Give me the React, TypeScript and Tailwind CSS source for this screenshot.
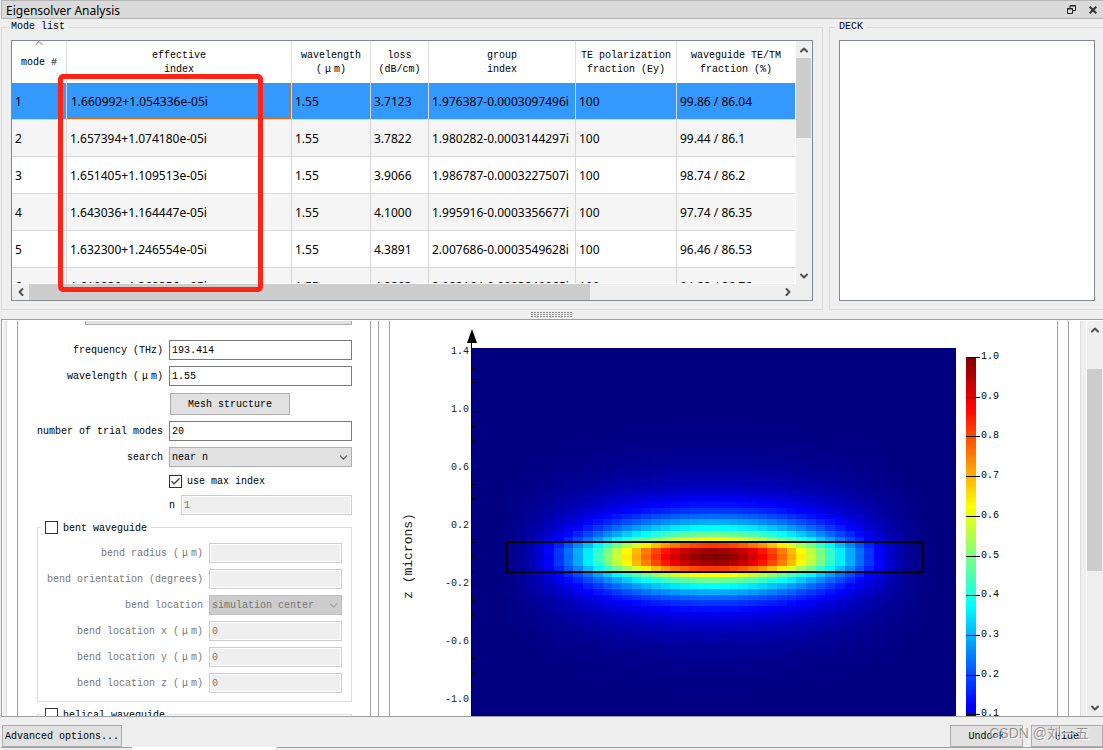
import type { ReactNode } from "react";
import { Check, ChevronDown, ChevronLeft, ChevronRight, ChevronUp } from "lucide-react";

const modes = [
  ["1", "1.660992+1.054336e-05i", "1.55", "3.7123", "1.976387-0.0003097496i", "100", "99.86 / 86.04"],
  ["2", "1.657394+1.074180e-05i", "1.55", "3.7822", "1.980282-0.0003144297i", "100", "99.44 / 86.1"],
  ["3", "1.651405+1.109513e-05i", "1.55", "3.9066", "1.986787-0.0003227507i", "100", "98.74 / 86.2"],
  ["4", "1.643036+1.164447e-05i", "1.55", "4.1000", "1.995916-0.0003356677i", "100", "97.74 / 86.35"],
  ["5", "1.632300+1.246554e-05i", "1.55", "4.3891", "2.007686-0.0003549628i", "100", "96.46 / 86.53"],
  ["6", "1.619220+1.368856e-05i", "1.55", "4.8203", "2.022164-0.0003840065i", "100", "94.88 / 86.76"],
];

const headers = [
  ["mode #"],
  ["effective", "index"],
  ["wavelength", "(μm)"],
  ["loss", "(dB/cm)"],
  ["group", "index"],
  ["TE polarization", "fraction (Ey)"],
  ["waveguide TE/TM", "fraction (%)"],
];

const CELL_W = 9.69;
const CELL_H = 5.77;
const CENTER_X = 324;
const CENTER_Y = 236;

// decay of the field away from the core, one entry per mesh row
const rowPeak = [1, 0.97, 0.82, 0.62];

function fieldAt(col: number, row: number) {
  const r = Math.abs(row);
  const c = Math.abs(col);
  const peak = r < rowPeak.length ? rowPeak[r] : 0.62 * Math.pow(0.78, r - 3);
  const half = 22 + r * 0.25;
  const edge = half - 2;
  const cos2 = (k: number) => Math.cos((Math.PI * k) / (2 * half)) ** 2;
  const side = c < edge ? cos2(c) : cos2(edge) * Math.pow(0.5, c - edge);
  return peak * side;
}

function jet(v: number) {
  const ch = (center: number) =>
    Math.round(255 * Math.max(0, Math.min(1, 1.5 - Math.abs(4 * v - center))));
  return `rgb(${ch(3)},${ch(2)},${ch(1)})`;
}

const cells: { x: number; y: number; fill: string }[] = [];
for (let row = -35; row <= 27; row++) {
  for (let col = -25; col < 25; col++) {
    const v = fieldAt(col, row);
    if (v < 0.004) continue;
    cells.push({
      x: CENTER_X + (col - 0.5) * CELL_W,
      y: CENTER_Y + (row - 0.5) * CELL_H,
      fill: jet(v),
    });
  }
}

const zLabels = ["1.4", "1.0", "0.6", "0.2", "-0.2", "-0.6", "-1.0"];
const barLabels = ["1.0", "0.9", "0.8", "0.7", "0.6", "0.5", "0.4", "0.3", "0.2", "0.1"];

// the mu takes two character cells
function UnitText({ text }: { text: string }) {
  const [before, after] = text.split("μ");
  if (after === undefined) return <>{text}</>;
  return (
    <>
      {before}
      <span className="inline-block w-3 text-center">μ</span>
      {after}
    </>
  );
}

function FieldPlot() {
  return (
    <svg
      width="630"
      height="395"
      viewBox="0 0 630 395"
      role="img"
      aria-label="Mode profile"
      className="block shrink-0 font-['Liberation_Mono',monospace]"
    >
      <defs>
        <linearGradient id="jet" gradientUnits="userSpaceOnUse" x1="0" y1="36" x2="0" y2="434">
          <stop offset="0" stopColor="#800000" />
          <stop offset="0.125" stopColor="#ff0000" />
          <stop offset="0.375" stopColor="#ffff00" />
          <stop offset="0.625" stopColor="#00ffff" />
          <stop offset="0.875" stopColor="#0000ff" />
          <stop offset="1" stopColor="#000080" />
        </linearGradient>
      </defs>

      <rect x="81" y="27" width="485" height="368" fill="#000080" />
      <g shapeRendering="crispEdges">
        {cells.map((c, i) => (
          <rect key={i} x={c.x} y={c.y} width={CELL_W} height={CELL_H} fill={c.fill} />
        ))}
      </g>
      <rect
        x="116.5"
        y="221"
        width="416"
        height="30"
        fill="none"
        stroke="#000"
        strokeWidth="2"
        strokeLinejoin="round"
      />

      <path d="M81.5 12V395" stroke="#000" />
      <path d="M82 8L87 22H77Z" />
      {Array.from({ length: 26 }, (_, i) => (
        <path
          key={i}
          d={`M82 ${Math.round(32 + i * 14.5) + 0.5}h${i % 4 === 0 ? 8 : 4}`}
          stroke="#000"
        />
      ))}
      {zLabels.map((t, i) => (
        <text key={t} x="79" y={33 + i * 58} textAnchor="end" fontSize="10" fill="#222">
          {t}
        </text>
      ))}
      <text transform="translate(22 235) rotate(-90)" textAnchor="middle" fontSize="13" fill="#222">
        z (microns)
      </text>

      <rect x="576" y="36" width="10" height="359" fill="url(#jet)" />
      {barLabels.map((t, i) => (
        <g key={t}>
          <path d={`M576 ${Math.round(36 + i * 39.7) + 0.5}h14`} stroke="#000" />
          <text x="591" y={Math.round(38 + i * 39.7)} fontSize="10">
            {t}
          </text>
        </g>
      ))}
    </svg>
  );
}

function VerticalScroll({ thumb }: { thumb: string }) {
  return (
    <div className="flex w-[15px] min-h-0 flex-1 flex-col items-center text-[#505050]">
      <button type="button" aria-label="Scroll up" className="flex h-[17px] shrink-0 items-center">
        <ChevronUp size={12} strokeWidth={4} />
      </button>
      <div className={`w-full shrink-0 bg-[#cdcdcd] ${thumb}`} />
      <button
        type="button"
        aria-label="Scroll down"
        className="mt-auto flex h-[17px] shrink-0 items-center"
      >
        <ChevronDown size={12} strokeWidth={4} />
      </button>
    </div>
  );
}

function ModeTable() {
  return (
    <div className="flex h-[261px] border border-[#828790] bg-white">
      <div className="flex min-w-0 flex-1 flex-col">
        <div className="mr-px mb-px min-h-0 flex-1 overflow-hidden">
          <table className="w-full table-fixed border-separate border-spacing-0">
            <colgroup>
              <col className="w-[55px]" />
              <col className="w-[225px]" />
              <col className="w-[79px]" />
              <col className="w-[58px]" />
              <col className="w-[147px]" />
              <col className="w-[101px]" />
              <col />
            </colgroup>
            <thead>
              <tr className="h-[42px]">
                {headers.map((lines, i) => (
                  <th
                    key={i}
                    className="relative border-r border-[#e0e0e0] p-0 pt-[2px] text-[10px] leading-[14px] font-normal last:border-r-0"
                  >
                    {i === 0 && (
                      <ChevronUp
                        size={12}
                        strokeWidth={2}
                        className="absolute -top-1 left-1/2 -translate-x-1/2 text-[#666]"
                      />
                    )}
                    {lines.map((line) => (
                      <div key={line} className="whitespace-nowrap">
                        <UnitText text={line} />
                      </div>
                    ))}
                  </th>
                ))}
              </tr>
            </thead>
            <tbody className="font-['Noto_Sans',sans-serif] text-xs">
              {modes.map((mode, r) => (
                <tr
                  key={mode[0]}
                  className={`h-[37px] ${
                    r === 0 ? "bg-[#3399ff]" : r % 2 ? "bg-[#f5f5f5]" : "bg-white"
                  }`}
                >
                  {mode.map((value, c) => (
                    <td
                      key={c}
                      className="border-r border-b border-[#d8d8d8] p-0 whitespace-nowrap last:border-r-0"
                    >
                      <div
                        className={`flex h-9 items-center pt-[2px] pl-[3px] ${
                          r === 0 && c === 1 ? "border border-dotted border-[#d0690f] pt-px pl-[2px]" : ""
                        }`}
                      >
                        {value}
                      </div>
                    </td>
                  ))}
                </tr>
              ))}
            </tbody>
          </table>
        </div>
        <div className="flex h-4 shrink-0 items-center bg-[#efefef] text-[#505050]">
          <button type="button" aria-label="Scroll left" className="flex w-[17px] justify-center">
            <ChevronLeft size={12} strokeWidth={4} />
          </button>
          <div className="h-full w-[561px] bg-[#cdcdcd]" />
          <button type="button" aria-label="Scroll right" className="ml-auto flex w-[17px] justify-center">
            <ChevronRight size={12} strokeWidth={4} />
          </button>
        </div>
      </div>
      <div className="flex w-4 shrink-0 flex-col bg-[#efefef] pb-4">
        <VerticalScroll thumb="h-[80px]" />
      </div>
    </div>
  );
}

const inputBase = "block h-5 w-full min-w-0 rounded-none border px-[2px] text-[10px] outline-none";

function TextBox({ id, value, disabled }: { id: string; value: string; disabled?: boolean }) {
  return (
    <input
      id={id}
      type="text"
      defaultValue={value}
      disabled={disabled}
      className={`${inputBase} ${
        disabled
          ? "border-[#cccccc] bg-[#efefef] text-[#787878] shadow-[inset_0_0_0_1px_#fff]"
          : "border-[#7a7a7a] bg-white text-black"
      }`}
    />
  );
}

function SelectBox({ id, value, disabled }: { id: string; value: string; disabled?: boolean }) {
  return (
    <div className="relative">
      <select
        id={id}
        disabled={disabled}
        className={`${inputBase} appearance-none pt-px ${
          disabled
            ? "border-[#bfbfbf] bg-[#cccccc] text-[#787878] opacity-100"
            : "border-[#adadad] bg-[#e1e1e1] text-black"
        }`}
      >
        <option>{value}</option>
      </select>
      <ChevronDown
        size={13}
        strokeWidth={2}
        className={`pointer-events-none absolute top-1 right-[2px] ${
          disabled ? "text-[#a0a0a0]" : "text-[#505050]"
        }`}
      />
    </div>
  );
}

function CheckBox({ id, label, checked }: { id: string; label: string; checked?: boolean }) {
  return (
    <div className="flex h-[13px] items-center gap-[5px]">
      <span className="relative flex">
        <input
          id={id}
          type="checkbox"
          defaultChecked={checked}
          className="peer size-[13px] appearance-none border border-[#333] bg-white"
        />
        <Check
          size={11}
          strokeWidth={3}
          className="pointer-events-none absolute top-px left-px hidden text-[#444] peer-checked:block"
        />
      </span>
      <label htmlFor={id} className="pt-[2px]">
        {label}
      </label>
    </div>
  );
}

function Row({ id, label, children }: { id: string; label: string; children: ReactNode }) {
  return (
    <div className="grid grid-cols-[145px_183px] items-center gap-[6px]">
      <label htmlFor={id} className="pt-[2px] text-right whitespace-nowrap">
        <UnitText text={label} />
      </label>
      {children}
    </div>
  );
}

const bendFields = [
  { id: "bend-radius", label: "bend radius (μm)", value: "" },
  { id: "bend-orientation", label: "bend orientation (degrees)", value: "" },
  { id: "bend-location", label: "bend location", value: "simulation center", select: true },
  { id: "bend-x", label: "bend location x (μm)", value: "0" },
  { id: "bend-y", label: "bend location y (μm)", value: "0" },
  { id: "bend-z", label: "bend location z (μm)", value: "0" },
];

const buttonClass =
  "h-[22px] border border-[#adadad] bg-[#e1e1e1] pt-[2px] text-center text-[10px] whitespace-nowrap";

function SettingsForm() {
  return (
    <form className="w-[354px] shrink-0 overflow-hidden border-x border-[#a0a0a0]">
      {/* scrolled a little: only the foot of the first button is in view */}
      <div className="-mt-[18px] flex flex-col gap-[6px]">
        <button
          type="button"
          aria-label="Set frequency"
          className={`mr-[18px] mb-[9px] ml-[67px] ${buttonClass}`}
        />
        <Row id="frequency" label="frequency (THz)">
          <TextBox id="frequency" value="193.414" />
        </Row>
        <Row id="wavelength" label="wavelength (μm)">
          <TextBox id="wavelength" value="1.55" />
        </Row>
        <div className="flex h-[23px] items-center pl-[152px]">
          <button type="button" className={`w-[120px] ${buttonClass}`}>
            Mesh structure
          </button>
        </div>
        <Row id="trial-modes" label="number of trial modes">
          <TextBox id="trial-modes" value="20" />
        </Row>
        <Row id="search" label="search">
          <SelectBox id="search" value="near n" />
        </Row>
        <div className="flex h-4 items-center pl-[151px]">
          <CheckBox id="max-index" label="use max index" checked />
        </div>
        <div className="mr-[18px] flex items-center gap-[6px] pl-[151px]">
          <label htmlFor="n" className="pt-[2px]">
            n
          </label>
          <TextBox id="n" value="1" disabled />
        </div>

        <fieldset className="mr-[18px] ml-[19px] border border-[#dcdcdc] pb-2">
          <legend className="ml-[3px] px-1">
            <CheckBox id="bent" label="bent waveguide" />
          </legend>
          <div className="flex flex-col gap-[6px] pt-[9px] text-[#787878]">
            {bendFields.map((f) => (
              <div key={f.id} className="grid grid-cols-[165px_133px] items-center gap-[6px]">
                <label htmlFor={f.id} className="pt-[2px] text-right whitespace-nowrap">
                  <UnitText text={f.label} />
                </label>
                {f.select ? (
                  <SelectBox id={f.id} value={f.value} disabled />
                ) : (
                  <TextBox id={f.id} value={f.value} disabled />
                )}
              </div>
            ))}
          </div>
        </fieldset>

        <fieldset className="mr-[18px] ml-[19px] border border-[#dcdcdc] pb-40">
          <legend className="ml-[3px] px-1">
            <CheckBox id="helical" label="helical waveguide" />
          </legend>
        </fieldset>
      </div>
    </form>
  );
}

export default function App() {
  return (
    <div className="flex h-screen flex-col overflow-hidden bg-[#efefef] pl-px font-['Liberation_Mono','Noto_Sans_CJK_SC',monospace] text-[10px] leading-[14px] text-black">
      <header className="flex h-[19px] shrink-0 items-center border-y border-l border-[#b4b4b4] bg-[#dadada] pr-[6px] pl-1">
        <h1 className="pt-[2px] font-['Noto_Sans',sans-serif] text-xs">Eigensolver Analysis</h1>
        <button type="button" aria-label="Undock window" className="ml-auto">
          <svg width="9" height="9" viewBox="0 0 9 9" fill="none" stroke="#222">
            <path d="M3 3V.5H8.5V5.5H6M3 1H9M.5 3.5H5.5V8.5H.5ZM0 4H6" />
          </svg>
        </button>
        <button type="button" aria-label="Close" className="ml-[13px]">
          <svg width="8" height="8" viewBox="0 0 8 8" stroke="#333" strokeWidth="2">
            <path d="M.7.7L7.3 7.3M7.3.7L.7 7.3" />
          </svg>
        </button>
      </header>

      <div className="grid shrink-0 grid-cols-[3fr_1fr] gap-[6px] pt-px">
        <fieldset className="min-w-0 border border-[#dcdcdc] px-[9px] pt-[6px] pb-2">
          <legend className="-ml-1 px-1">Mode list</legend>
          <div className="relative">
            <ModeTable />
            <div className="pointer-events-none absolute top-[34px] left-[47px] h-[218px] w-[205px] rounded-[5px] border-[5px] border-[#ff2416]" />
          </div>
        </fieldset>
        <fieldset className="min-w-0 border border-r-0 border-[#dcdcdc] pt-[6px] pr-2 pb-2 pl-[9px]">
          <legend className="-ml-1 px-1">DECK</legend>
          <div className="h-[261px] border border-[#828790] bg-white" />
        </fieldset>
      </div>

      <div className="flex h-[9px] shrink-0 items-center justify-center" role="separator">
        <svg width="42" height="5" viewBox="0 0 42 5" stroke="#8c8c8c" strokeDasharray="2 1">
          <path d="M0 .5H42M0 2.5H42M0 4.5H42" />
        </svg>
      </div>

      <main className="flex min-h-0 flex-1 overflow-hidden border-y border-l border-[#a0a0a0] bg-white pt-px pl-px">
        <div className="mr-[10px] w-1 shrink-0 border-r border-[#dcdcdc] bg-[#efefef]" />
        <SettingsForm />
        <div className="ml-[7px] flex min-w-0 flex-1 border-x border-[#a0a0a0] px-[10px]">
          <div className="min-w-0 flex-1 overflow-hidden border-x border-[#a0a0a0]">
            <FieldPlot />
          </div>
        </div>
        <div className="mr-px ml-[11px] w-[6px] shrink-0 border-l border-[#dcdcdc] bg-[#efefef]" />
        <div className="flex w-4 shrink-0 flex-col bg-[#efefef]">
          <VerticalScroll thumb="mt-[31px] h-[202px]" />
        </div>
      </main>

      <footer className="relative flex h-[30px] shrink-0 items-end pl-px">
        <button type="button" className={`w-[120px] ${buttonClass}`}>
          Advanced options...
        </button>
        <button type="button" className={`mr-2 ml-auto w-[73px] ${buttonClass}`}>
          Undock
        </button>
        <button type="button" className={`w-[72px] ${buttonClass}`}>
          Hide
        </button>
        <span className="pointer-events-none absolute right-[14px] bottom-1 font-['Liberation_Sans','Noto_Sans_CJK_SC',sans-serif] text-sm leading-5 text-[#7d7d7dcc] [text-shadow:1px_1px_0_#fff]">
          CSDN @刘一五
        </span>
      </footer>
      <div className="flex h-[3px] shrink-0">
        <div className="w-[131px] border-t border-[#a0a0a0]" />
        <div className="w-[145px] border-r border-[#dcdcdc] bg-white" />
        <div className="flex-1 border-t border-[#a0a0a0]" />
      </div>
    </div>
  );
}
